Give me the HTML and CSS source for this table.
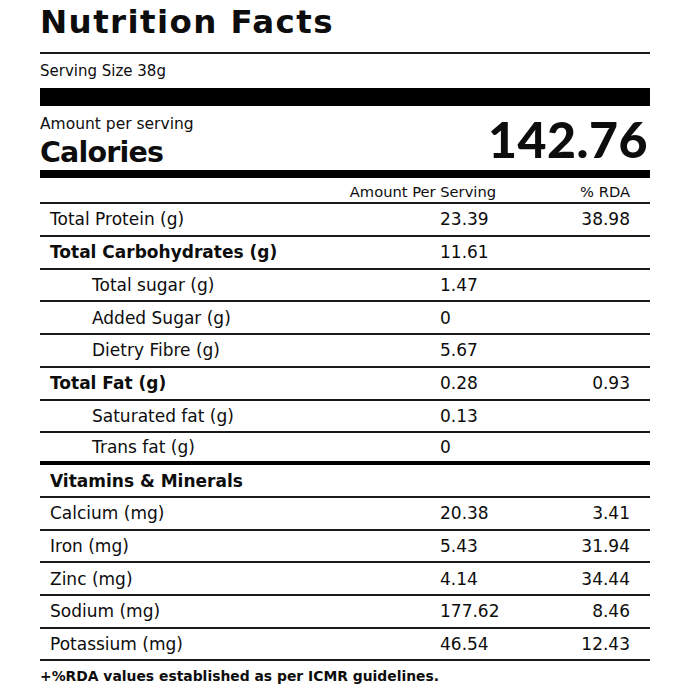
FILE: index.html
```html
<!DOCTYPE html>
<html>
<head>
<meta charset="utf-8">
<link rel="stylesheet" href="styles.css">
</head>
<body>
<div class="label">
  <h1 class="title">Nutrition Facts</h1>
  <div class="serving">Serving Size 38g</div>
  <div class="bar-thick"></div>
  <div class="cal">
    <div class="cal-left">
      <div class="aps">Amount per serving</div>
      <div class="cal-word">Calories</div>
    </div>
    <div class="cal-num">142.76</div>
  </div>
  <div class="bar-mid"></div>
  <div class="head">
    <span class="head-amt">Amount Per Serving</span>
    <span class="head-rda">% RDA</span>
  </div>
  <div class="rows">
    <div class="row"><span class="name">Total Protein (g)</span><span class="amt">23.39</span><span class="rda">38.98</span></div>
    <div class="row"><span class="name bold">Total Carbohydrates (g)</span><span class="amt">11.61</span><span class="rda"></span></div>
    <div class="row"><span class="name indent">Total sugar (g)</span><span class="amt">1.47</span><span class="rda"></span></div>
    <div class="row"><span class="name indent">Added Sugar (g)</span><span class="amt">0</span><span class="rda"></span></div>
    <div class="row"><span class="name indent">Dietry Fibre (g)</span><span class="amt">5.67</span><span class="rda"></span></div>
    <div class="row"><span class="name bold">Total Fat (g)</span><span class="amt">0.28</span><span class="rda">0.93</span></div>
    <div class="row"><span class="name indent">Saturated fat (g)</span><span class="amt">0.13</span><span class="rda"></span></div>
    <div class="row last"><span class="name indent">Trans fat (g)</span><span class="amt">0</span><span class="rda"></span></div>
  </div>
  <div class="bar-sep"></div>
  <div class="rows">
    <div class="row vit"><span class="name bold">Vitamins &amp; Minerals</span><span class="amt"></span><span class="rda"></span></div>
    <div class="row"><span class="name">Calcium (mg)</span><span class="amt">20.38</span><span class="rda">3.41</span></div>
    <div class="row"><span class="name">Iron (mg)</span><span class="amt">5.43</span><span class="rda">31.94</span></div>
    <div class="row"><span class="name">Zinc (mg)</span><span class="amt">4.14</span><span class="rda">34.44</span></div>
    <div class="row"><span class="name">Sodium (mg)</span><span class="amt">177.62</span><span class="rda">8.46</span></div>
    <div class="row"><span class="name">Potassium (mg)</span><span class="amt">46.54</span><span class="rda">12.43</span></div>
  </div>
  <div class="foot">+%RDA values established as per ICMR guidelines.</div>
</div>
</body>
</html>
```

FILE: styles.css
```css
* { box-sizing: border-box; }
html, body { margin: 0; padding: 0; background: #fff; }
body { font-family: "DejaVu Sans", "Liberation Sans", sans-serif; color: #0d0d0d; }
.label { width: 610px; margin-left: 40px; }

.title {
  margin: 0; height: 52px; padding-top: 3px;
  font-size: 32.5px; line-height: 38px; font-weight: 700;
  letter-spacing: 1.4px;
}
.serving {
  height: 36px; border-top: 2px solid #1a1a1a; padding-top: 7.8px;
  font-size: 15px; line-height: 18px;
}
.bar-thick { height: 18px; background: #000; }

.cal { height: 64px; display: flex; justify-content: space-between; align-items: flex-start; }
.cal-left { display: flex; flex-direction: column; padding-top: 8.6px; }
.aps { font-size: 15.5px; line-height: 18px; }
.cal-word {
  margin-top: 4.8px; font-size: 28.5px; line-height: 32px; font-weight: 700;
  letter-spacing: -0.8px;
}
.cal-num {
  padding-top: 4.65px; font-family: "Lato", "DejaVu Sans", sans-serif;
  font-size: 50px; line-height: 56px; font-weight: 900; letter-spacing: 0.5px;
  margin-right: 2px;
}
.bar-mid { height: 8px; background: #000; }

.head {
  height: 26px; border-bottom: 2px solid #1a1a1a; padding: 5.4px 20px 0 0;
  display: flex; justify-content: flex-end; align-items: flex-start;
  font-size: 14.7px; line-height: 17px;
}
.head-amt { margin-right: 84px; }

.row {
  height: 32.75px; border-bottom: 2px solid #1a1a1a;
  display: grid; grid-template-columns: 1fr 130px 60px; align-items: center;
  padding: 0 20px 0 10px;
  font-size: 17px; line-height: 20px;
}
.row.last { height: 27.75px; border-bottom: none; }
.row.vit { height: 33px; }
.rows + .bar-sep + .rows .row:not(.vit) { height: 32.7px; }
.name.bold { font-weight: 700; }
.name.indent { padding-left: 42px; }
.rda { text-align: right; }
.bar-sep { height: 4px; background: #000; }

.foot {
  padding-top: 6.3px; font-size: 13.9px; line-height: 16px; font-weight: 700;
}
```
